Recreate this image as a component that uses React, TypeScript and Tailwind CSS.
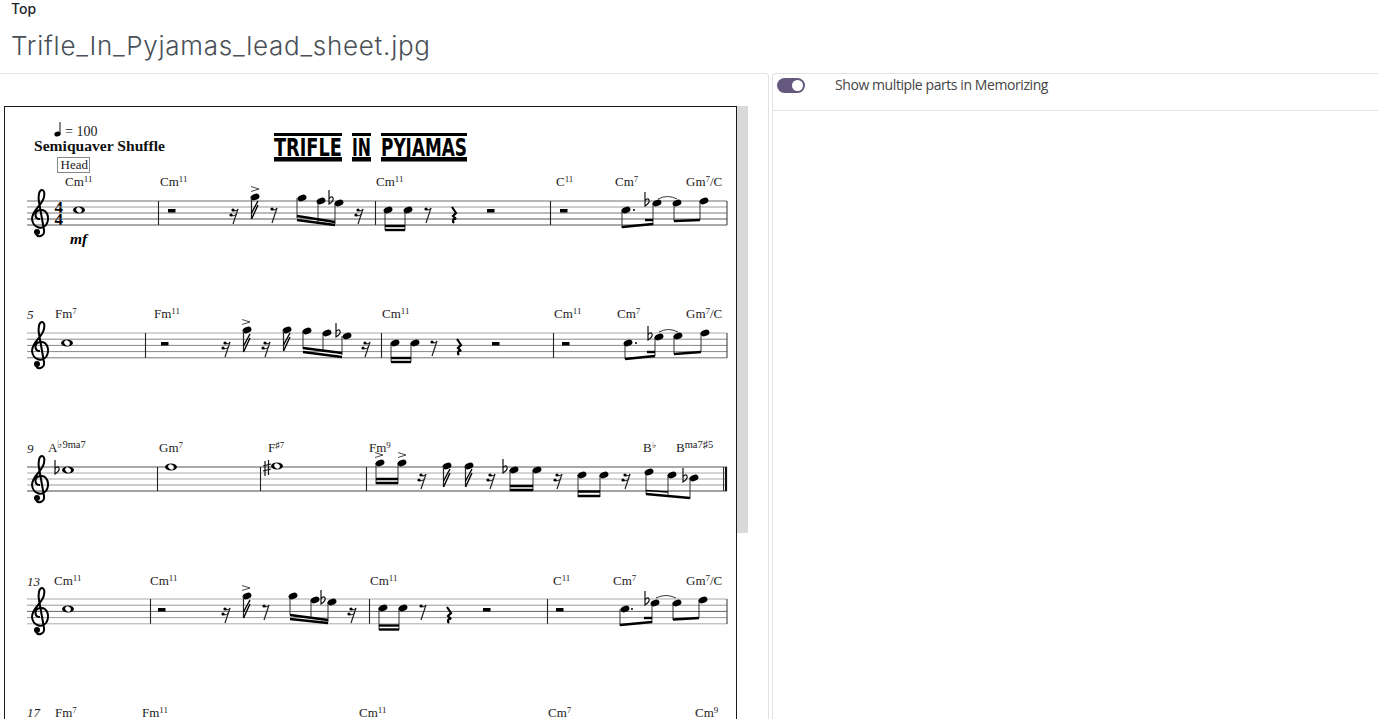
type Pt = [number, number];

const SERIF = '"Liberation Serif", serif';

type Chord = { x: number; root: string; sup?: string; bass?: string };

type Staff = {
  top: number;
  gap: number;
  bars: number[];
  lineColors: string[];
  num?: string;
  chordY: number;
  chords: Chord[];
  wholes: Pt[];
  rects: Pt[];
  rest8: Pt[];
  rest16: Pt[];
  quarter: Pt[];
  flats: Pt[];
  sharps: Pt[];
  accents: Pt[];
  flagged: { x: number; y: number; bottom: number }[];
  heads: Pt[];
  dots: Pt[];
  stems: [number, number, number][];
  beams: [number, number, number, number, number?][];
  ties: [number, number, number][];
};

const staves: Staff[] = [
  {
    top: 201,
    gap: 6,
    bars: [158, 375, 550],
    lineColors: ['#6f6f6f', '#999', '#777', '#555', '#555'],
    chordY: 186,
    chords: [
      { x: 65, root: 'Cm', sup: '11' },
      { x: 160, root: 'Cm', sup: '11' },
      { x: 376, root: 'Cm', sup: '11' },
      { x: 556, root: 'C', sup: '11' },
      { x: 615, root: 'Cm', sup: '7' },
      { x: 686, root: 'Gm', sup: '7', bass: '/C' },
    ],
    wholes: [[79, 210]],
    rects: [[172, 211], [491, 211], [564, 211]],
    rest8: [[274, 215], [428, 215]],
    rest16: [[235, 216], [360, 216]],
    quarter: [[454, 215]],
    flats: [[331, 201], [647, 203]],
    sharps: [],
    accents: [[255, 189]],
    flagged: [{ x: 255, y: 197, bottom: 219 }],
    heads: [[302, 198], [321, 201], [339, 203], [388, 210], [408, 210], [626, 210], [657, 203], [677, 203], [704, 201]],
    dots: [[634, 210]],
    stems: [[297, 198, 218], [318, 201, 222], [335, 203, 224], [385, 210, 230], [405, 210, 230], [622, 210, 228], [653, 203, 225], [674, 203, 221], [700, 201, 220]],
    beams: [[297, 216, 335, 222], [297, 220, 335, 225], [385, 226, 405, 226], [385, 230, 405, 230], [622, 227, 653, 224], [645, 220, 653, 220], [674, 221, 700, 220]],
    ties: [[658, 677, 199]],
  },
  {
    top: 333,
    gap: 6.2,
    bars: [145, 381, 553],
    lineColors: ['#c4c4c4', '#888', '#888', '#888', '#777'],
    num: '5',
    chordY: 318,
    chords: [
      { x: 55, root: 'Fm', sup: '7' },
      { x: 154, root: 'Fm', sup: '11' },
      { x: 382, root: 'Cm', sup: '11' },
      { x: 554, root: 'Cm', sup: '11' },
      { x: 617, root: 'Cm', sup: '7' },
      { x: 686, root: 'Gm', sup: '7', bass: '/C' },
    ],
    wholes: [[67, 343]],
    rects: [[165, 344], [496, 344], [566, 344]],
    rest8: [[434, 348]],
    rest16: [[227, 349], [267, 349], [367, 349]],
    quarter: [[459, 347]],
    flats: [[338, 334], [650, 337]],
    sharps: [],
    accents: [[246, 322]],
    flagged: [{ x: 247, y: 330, bottom: 352 }, { x: 287, y: 330, bottom: 351 }],
    heads: [[307, 331], [327, 333], [347, 336], [395, 343], [415, 343], [628, 343], [659, 337], [678, 336], [705, 333]],
    dots: [[636, 343]],
    stems: [[303, 331, 349], [323, 333, 352], [342, 336, 355], [391, 343, 362], [411, 343, 362], [625, 343, 359], [655, 337, 356], [674, 336, 354], [701, 333, 352]],
    beams: [[303, 348, 342, 353], [303, 352, 342, 357], [391, 358, 411, 358], [391, 362, 411, 362], [625, 359, 655, 356], [647, 352, 655, 352], [674, 354, 701, 352]],
    ties: [[659, 678, 332]],
  },
  {
    top: 467,
    gap: 6,
    bars: [157, 260, 366],
    lineColors: ['#555', '#aaa', '#aaa', '#999', '#444'],
    num: '9',
    chordY: 452,
    chords: [
      { x: 48, root: 'A', sup: '♭9ma7' },
      { x: 159, root: 'Gm', sup: '7' },
      { x: 268, root: 'F', sup: '♯7' },
      { x: 369, root: 'Fm', sup: '9' },
      { x: 643, root: 'B', sup: '♭' },
      { x: 676, root: 'B', sup: 'ma7♯5' },
    ],
    wholes: [[68, 470], [171, 467], [277, 466]],
    rects: [],
    rest8: [],
    rest16: [[423, 481], [492, 481], [559, 481], [627, 481]],
    quarter: [],
    flats: [[57, 471], [505, 470], [685, 479]],
    sharps: [[267, 468]],
    accents: [[379, 455], [402, 455]],
    flagged: [{ x: 447, y: 466, bottom: 487 }, { x: 469, y: 466, bottom: 487 }],
    heads: [[380, 463], [402, 463], [514, 470], [537, 470], [582, 475], [604, 475], [649, 472], [672, 475], [694, 478]],
    dots: [],
    stems: [[376, 463, 484], [398, 463, 484], [510, 470, 491], [533, 470, 491], [578, 475, 497], [600, 475, 497], [646, 472, 494], [668, 475, 495], [690, 478, 499]],
    beams: [[376, 479, 398, 479, 2.5], [376, 483, 398, 483, 2.5], [510, 486, 533, 486, 2.5], [510, 490, 533, 490, 2.5], [578, 491.5, 600, 491.5, 2.5], [578, 496, 600, 496, 2.5], [646, 490.5, 668, 492, 1.5], [646, 494, 690, 498, 2.5]],
    ties: [],
  },
  {
    top: 599,
    gap: 6.2,
    bars: [150, 369, 547],
    lineColors: ['#c4c4c4', '#999', '#666', '#999', '#aaa'],
    num: '13',
    chordY: 585,
    chords: [
      { x: 54, root: 'Cm', sup: '11' },
      { x: 150, root: 'Cm', sup: '11' },
      { x: 370, root: 'Cm', sup: '11' },
      { x: 553, root: 'C', sup: '11' },
      { x: 613, root: 'Cm', sup: '7' },
      { x: 686, root: 'Gm', sup: '7', bass: '/C' },
    ],
    wholes: [[68, 609]],
    rects: [[162, 610], [487, 610], [560, 610]],
    rest8: [[266, 612], [423, 612]],
    rest16: [[227, 615], [353, 615]],
    quarter: [[449, 615]],
    flats: [[323, 601], [647, 602]],
    sharps: [],
    accents: [[246, 588]],
    flagged: [{ x: 247, y: 596, bottom: 618 }],
    heads: [[293, 596], [315, 600], [332, 602], [383, 608], [403, 608], [625, 609], [655, 603], [677, 603], [703, 600]],
    dots: [[632, 609]],
    stems: [[290, 596, 615], [311, 600, 618], [328, 602, 622], [379, 608, 630], [399, 608, 630], [620, 609, 626], [652, 603, 623], [673, 603, 620], [699, 600, 618]],
    beams: [[290, 615, 328, 620], [290, 619, 328, 623], [379, 625.5, 399, 625.5], [379, 629.5, 399, 629.5], [620, 625, 652, 622], [644, 618, 652, 618], [673, 619.5, 699, 618]],
    ties: [[656, 676, 598]],
  },
];

const lastRow: Chord[] = [
  { x: 55, root: 'Fm', sup: '7' },
  { x: 142, root: 'Fm', sup: '11' },
  { x: 359, root: 'Cm', sup: '11' },
  { x: 548, root: 'Cm', sup: '7' },
  { x: 695, root: 'Cm', sup: '9' },
];

function ChordName({ chord, y }: { chord: Chord; y: number }) {
  const long = (chord.sup ?? '').length > 2;
  return (
    <text x={chord.x} y={y} fontSize={13} fill="#222" fontFamily={SERIF}>
      {chord.root}
      {chord.sup && (
        <tspan fontSize={long ? 10.5 : 9} dy={-4}>
          {chord.sup}
        </tspan>
      )}
      {chord.bass && <tspan dy={4}>{chord.bass}</tspan>}
    </text>
  );
}

function Clef({ top }: { top: number }) {
  return (
    <g transform={`translate(0 ${top - 201})`}>
      <path
        d="M40 219C34 219 34 211 40 210C48 209 50 219 46 225C42 230 33 228 32 219C32 210 42 206 44 197C45 193 44 190 42 190C39 190 38 196 39 202L44 230C45 236 38 238 36 234"
        fill="none"
        stroke="#000"
        strokeWidth={2}
      />
      <circle cx={37} cy={232} r={3} fill="#000" />
    </g>
  );
}

function Rest({ x, y, dots }: { x: number; y: number; dots: number }) {
  return (
    <g>
      <path d={`M${x + 3} ${y - 7}L${x - 2} ${y + 8}`} stroke="#222" strokeWidth={1.2} />
      <path d={`M${x - 2} ${y - 6}Q${x + 1} ${y - 4} ${x + 3} ${y - 7}`} stroke="#222" fill="none" strokeWidth={1.1} />
      <circle cx={x - 2} cy={y - 6} r={1.6} fill="#000" />
      {dots > 1 && (
        <>
          <path d={`M${x - 4} ${y - 1}Q${x - 1} ${y + 1} ${x + 1.5} ${y - 2}`} stroke="#222" fill="none" strokeWidth={1.1} />
          <circle cx={x - 4} cy={y - 1} r={1.6} fill="#000" />
        </>
      )}
    </g>
  );
}

function Flat({ x, y }: { x: number; y: number }) {
  return (
    <path
      d={`M${x - 2} ${y - 11}V${y + 3}C${x + 1} ${y + 1} ${x + 3} ${y - 1} ${x + 2} ${y - 3}C${x + 1} ${y - 5} ${x - 1} ${y - 4} ${x - 2} ${y - 2}`}
      fill="none"
      stroke="#111"
      strokeWidth={1.2}
    />
  );
}

function Sharp({ x, y }: { x: number; y: number }) {
  return (
    <path
      d={`M${x - 2} ${y - 7}V${y + 8}M${x + 1.5} ${y - 8}V${y + 7}M${x - 4} ${y - 2}L${x + 4} ${y - 4}M${x - 4} ${y + 3}L${x + 4} ${y + 1}`}
      fill="none"
      stroke="#111"
      strokeWidth={1.2}
    />
  );
}

function StaffRow({ staff }: { staff: Staff }) {
  const lines = [0, 1, 2, 3, 4].map((i) => staff.top + i * staff.gap);
  const bottom = lines[4];
  return (
    <g>
      {lines.map((y, i) => (
        <line
          key={i}
          x1={27}
          x2={727}
          y1={y}
          y2={y}
          stroke={staff.lineColors[i]}
          strokeWidth={staff.lineColors[i] === '#c4c4c4' ? 1.6 : 1}
        />
      ))}
      {staff.bars.map((x) => (
        <line key={x} x1={x + 0.5} x2={x + 0.5} y1={staff.top} y2={bottom} stroke="#222" strokeWidth={1.1} />
      ))}
      <Clef top={staff.top} />
      {staff.num && (
        <text x={27} y={staff.chordY + 1} fontSize={13} fontStyle="italic" fill="#222" fontFamily={SERIF}>
          {staff.num}
        </text>
      )}
      {staff.chords.map((c) => (
        <ChordName key={c.x} chord={c} y={staff.chordY} />
      ))}
      {staff.wholes.map(([x, y]) => (
        <g key={x}>
          <ellipse cx={x} cy={y} rx={6} ry={3.5} fill="#000" />
          <ellipse cx={x} cy={y} rx={3} ry={2.3} fill="#fff" transform={`rotate(35 ${x} ${y})`} />
        </g>
      ))}
      {staff.rects.map(([x, y]) => (
        <rect key={x} x={x - 4} y={y - 2} width={7.5} height={3.5} fill="#000" />
      ))}
      {staff.rest8.map(([x, y]) => (
        <Rest key={x} x={x} y={y} dots={1} />
      ))}
      {staff.rest16.map(([x, y]) => (
        <Rest key={x} x={x} y={y} dots={2} />
      ))}
      {staff.quarter.map(([x, y]) => (
        <path
          key={x}
          d={`M${x - 2} ${y - 8}L${x + 2} ${y - 2}L${x - 1} ${y + 1}L${x + 2} ${y + 4}C${x - 1} ${y + 3} ${x - 2} ${y + 6} ${x} ${y + 8}`}
          fill="none"
          stroke="#000"
          strokeWidth={2.2}
        />
      ))}
      {staff.flats.map(([x, y]) => (
        <Flat key={x} x={x} y={y} />
      ))}
      {staff.sharps.map(([x, y]) => (
        <Sharp key={x} x={x} y={y} />
      ))}
      {staff.accents.map(([x, y]) => (
        <path key={x} d={`M${x - 4} ${y - 2.5}L${x + 4} ${y}L${x - 4} ${y + 2.5}`} fill="none" stroke="#333" strokeWidth={0.9} />
      ))}
      {staff.stems.map(([x, y1, y2]) => (
        <line key={x} x1={x} x2={x} y1={y1} y2={y2} stroke="#333" strokeWidth={1} />
      ))}
      {staff.beams.map(([x1, y1, x2, y2, w], i) => (
        <line key={i} x1={x1} x2={x2} y1={y1} y2={y2} stroke="#000" strokeWidth={w ?? 2.4} />
      ))}
      {staff.heads.map(([x, y]) => (
        <ellipse key={x} cx={x} cy={y} rx={4.6} ry={3} fill="#000" transform={`rotate(-20 ${x} ${y})`} />
      ))}
      {staff.dots.map(([x, y]) => (
        <circle key={x} cx={x} cy={y} r={1} fill="#000" />
      ))}
      {staff.flagged.map((n) => (
        <g key={n.x}>
          <ellipse cx={n.x} cy={n.y} rx={4.6} ry={3} fill="#000" transform={`rotate(-20 ${n.x} ${n.y})`} />
          <line x1={n.x - 3.5} x2={n.x - 3.5} y1={n.y} y2={n.bottom} stroke="#222" strokeWidth={1.2} />
          <path
            d={`M${n.x - 3.5} ${n.bottom}L${n.x + 3} ${n.bottom - 14}M${n.x - 3.5} ${n.bottom - 6}L${n.x + 3} ${n.bottom - 18}`}
            stroke="#000"
            strokeWidth={1.4}
          />
        </g>
      ))}
      {staff.ties.map(([a, b, y]) => (
        <path key={a} d={`M${a} ${y}Q${(a + b) / 2} ${y - 5} ${b} ${y}`} fill="none" stroke="#222" strokeWidth={0.9} />
      ))}
    </g>
  );
}

// squeezed horizontally: the sheet's title lettering is much narrower than any installed face
const titleWords: { x: number; width: number; squeeze: number; text: string }[] = [
  { x: 274, width: 68, squeeze: 0.71, text: 'TRIFLE' },
  { x: 352, width: 19, squeeze: 0.63, text: 'IN' },
  { x: 381, width: 86, squeeze: 0.676, text: 'PYJAMAS' },
];

function LeadSheet() {
  return (
    <svg viewBox="5 107 731 612" width={731} height={612} className="block">
      <path d="M60 122V134" stroke="#111" strokeWidth={1} />
      <ellipse cx={57.5} cy={134} rx={3.2} ry={2.4} fill="#000" transform="rotate(-20 57.5 134)" />
      <text x={65} y={136} fontSize={14} fill="#222" fontFamily={SERIF}>
        = 100
      </text>
      <text x={34} y={151} fontSize={15.6} fontWeight={700} fill="#111" fontFamily={SERIF}>
        Semiquaver Shuffle
      </text>
      <rect x={57.5} y={157.5} width={32} height={15} fill="none" stroke="#888" />
      <text x={60.5} y={169} fontSize={13} fill="#222" fontFamily={SERIF}>
        Head
      </text>

      {titleWords.map((w) => (
        <g key={w.text}>
          <rect x={w.x} y={133} width={w.width} height={3} fill="#000" />
          <rect x={w.x} y={157} width={w.width} height={4.5} fill="#000" />
          <text
            transform={`translate(${w.x} 156) scale(${w.squeeze} 1)`}
            fontSize={25}
            fontWeight={700}
            fill="#000"
            fontFamily='"DejaVu Sans", sans-serif'
          >
            {w.text}
          </text>
        </g>
      ))}

      {/* time signature */}
      <text fontSize={17} fontWeight={700} fill="#000" fontFamily={SERIF}>
        <tspan x={54.5} y={213}>
          4
        </tspan>
        <tspan x={54.5} y={225}>
          4
        </tspan>
      </text>
      <text x={70} y={244} fontSize={15.5} fontWeight={700} fontStyle="italic" fill="#000" fontFamily={SERIF}>
        mf
      </text>

      {staves.map((s) => (
        <StaffRow key={s.top} staff={s} />
      ))}

      {/* closing double bar of line 3 */}
      <line x1={723.5} x2={723.5} y1={467} y2={491} stroke="#333" strokeWidth={1} />
      <line x1={726} x2={726} y1={467} y2={491} stroke="#111" strokeWidth={2.2} />
      {/* right edges of the other lines */}
      <line x1={727} x2={727} y1={201} y2={225} stroke="#333" strokeWidth={1} />
      <line x1={727} x2={727} y1={333} y2={358} stroke="#333" strokeWidth={1} />
      <line x1={727} x2={727} y1={599} y2={624} stroke="#333" strokeWidth={1} />

      <text x={27} y={717} fontSize={13} fontStyle="italic" fill="#222" fontFamily={SERIF}>
        17
      </text>
      {lastRow.map((c) => (
        <ChordName key={c.x} chord={c} y={717} />
      ))}
    </svg>
  );
}

export default function App() {
  return (
    <div className="flex h-screen flex-col overflow-hidden bg-white font-['Open_Sans',sans-serif]">
      <header className="h-[73px] shrink-0 px-[11px]">
        <div className="font-['Inter',sans-serif] text-[14px] leading-[18px] font-medium text-[#212529]">Top</div>
        <h1 className="mt-[8px] font-['Inter',sans-serif] text-[26px] leading-[40px] font-light tracking-[0.73px] text-[#495057]">
          Trifle_In_Pyjamas_lead_sheet.jpg
        </h1>
      </header>

      <main className="flex min-h-0 flex-1 gap-[3px]">
        <section className="flex w-[769px] shrink-0 items-start rounded-tr border-t border-r border-[#e2e2e2] pt-[32px] pl-[4px]">
          <div className="h-[700px] w-[733px] shrink-0 border border-[#1a1a1a]">
            <LeadSheet />
          </div>
          <div className="h-[427px] w-[11px] bg-[#d9d9d9]" />
        </section>

        <section className="flex-1 rounded-tl border-t border-l border-[#e2e2e2]">
          <div className="flex h-[37px] items-start border-b border-[#e2e2e2] pl-[4px]">
            <div className="mt-[4px] flex h-[15px] w-[28px] items-center justify-end rounded-full bg-[#65597f] pr-[2px]">
              <span className="h-[11px] w-[11px] rounded-full bg-white" />
            </div>
            <span className="ml-[30px] text-[14px] leading-[22px] tracking-[-0.42px] text-[#444]">
              Show multiple parts in Memorizing
            </span>
          </div>
        </section>
      </main>
    </div>
  );
}
